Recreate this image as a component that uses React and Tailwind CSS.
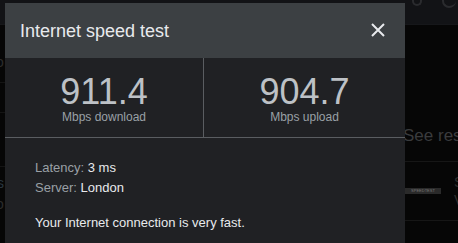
import React from "react";

export default function App() {
  return (
    <div
      className="relative w-[458px] h-[243px] overflow-hidden bg-[#060606] flex flex-col"
      style={{ fontFamily: '"Liberation Sans", Arial, sans-serif' }}
    >
      {/* background page */}
      <div className="h-[25px] shrink-0 bg-[#121316] border-b border-[#16171a] flex justify-end items-start gap-[14px] pr-[2px]">
        <div className="w-[10px] h-[6px] rounded-b-full border-b-2 border-x-2 border-[#2a2b2e] mr-[6px]" />
        <div className="w-[14px] h-[8px] rounded-b-full border-b-2 border-l-2 border-[#2a2b2e]" />
      </div>
      <div className="flex flex-1">
        <div className="w-[5px] overflow-hidden flex flex-col text-[14px] leading-[16px]">
          <div className="h-[58px] border-b border-[#141414] flex items-end pb-[12px] text-[#2c2c2c] -ml-[4px]">o</div>
          <div className="h-[30px] border-b border-[#141414]" />
          <div className="h-[54px] border-b border-[#141414]" />
          <div className="pt-[8px] -ml-[3px] text-[#2a3640]">s</div>
          <div className="pt-[5px] -ml-[4px] text-[#2c2c2c]">o</div>
        </div>
        <div className="flex-1" />
        <div className="w-[53px] overflow-hidden flex flex-col">
          <div className="h-[101px]" />
          <div className="text-[17px] leading-[20px] text-[#3a3b3d] whitespace-nowrap -ml-[2px]">See results</div>
          <div className="h-[16px] border-b border-[#161616]" />
          <div className="h-[59px] border-b border-[#161616] flex items-center gap-[13px]">
            <div className="w-[36px] h-[6px] shrink-0 bg-[#2a2a2a] text-[4px] leading-[6px] text-[#777] text-center">SPEEDTEST</div>
            <div className="flex flex-col text-[14px] leading-[18px] text-[#2e2e2e]">
              <span>S</span>
              <span>V</span>
            </div>
          </div>
        </div>
      </div>

      {/* dialog (modal overlay) */}
      <div className="absolute left-[5px] top-[3px] w-[400px] h-[260px] bg-[#202124] flex flex-col">
        <div className="h-[55px] bg-[#3c4043] flex items-center justify-between pl-[15px] pr-[20px]">
          <div className="text-[18px] leading-[24px] text-[#e8eaed]">Internet speed test</div>
          <svg width="14" height="14" viewBox="0 0 14 14" className="mb-[2px]">
            <path d="M1 1 L13 13 M13 1 L1 13" stroke="#e8eaed" strokeWidth="2" />
          </svg>
        </div>
        <div className="h-[80px] flex border-b border-[#5a5d61]">
          <div className="w-[199px] border-r border-[#5a5d61] flex flex-col items-center pt-[16px]">
            <div className="text-[36px] leading-[36px] text-[#bdc1c6]">911.4</div>
            <div className="text-[12px] leading-[14px] text-[#9aa0a6]">Mbps download</div>
          </div>
          <div className="flex-1 flex flex-col items-center pt-[16px]">
            <div className="text-[36px] leading-[36px] text-[#bdc1c6]">904.7</div>
            <div className="text-[12px] leading-[14px] text-[#9aa0a6]">Mbps upload</div>
          </div>
        </div>
        <div className="pl-[30px] pt-[20px] text-[13px] leading-[20px]">
          <div>
            <span className="text-[#9aa0a6]">Latency: </span>
            <span className="text-[#e8eaed]">3 ms</span>
          </div>
          <div>
            <span className="text-[#9aa0a6]">Server: </span>
            <span className="text-[#e8eaed]">London</span>
          </div>
          <div className="mt-[15px] text-[#e8eaed]">Your Internet connection is very fast.</div>
        </div>
      </div>
    </div>
  );
}
